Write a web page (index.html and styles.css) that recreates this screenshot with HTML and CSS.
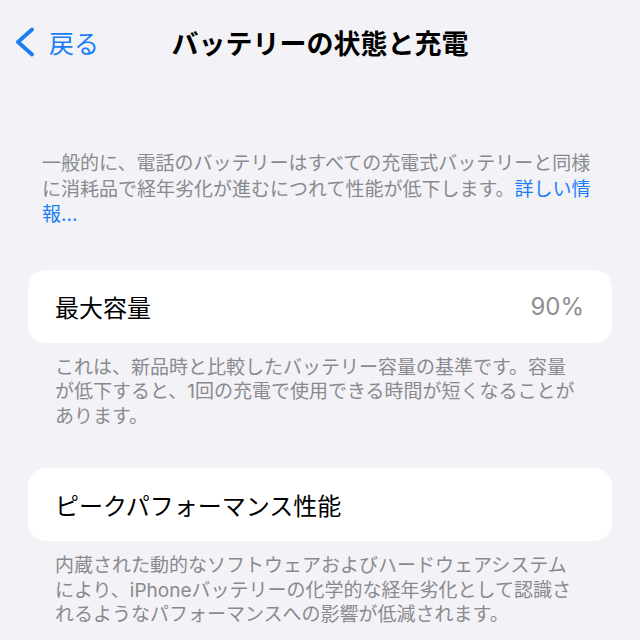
FILE: index.html
```html
<!DOCTYPE html>
<html lang="ja">
<head>
    <meta charset="UTF-8">
    <meta name="viewport" content="width=device-width, initial-scale=1.0">
    <title>バッテリーの状態と充電</title>
    <link rel="stylesheet" href="styles.css">
</head>
<body>
    <header class="nav">
        <a class="voltar" href="#">
            <svg class="chevron" width="22" height="30" viewBox="0 0 22 30">
                <path d="M18 2.5 L4 15 L18 27.5" fill="none" stroke="currentColor" stroke-width="3.8" stroke-linecap="round" stroke-linejoin="round"/>
            </svg>
            <span>戻る</span>
        </a>
        <h1 class="titulo">バッテリーの状態と充電</h1>
        <div></div>
    </header>

    <main class="conteudo">
        <p class="intro">一般的に、電話のバッテリーはすべての充電式バッテリーと同様<br>に消耗品で経年劣化が進むにつれて性能が低下します。<a href="#">詳しい情<br>報...</a></p>

        <section class="grupo">
            <div class="celula">
                <span>最大容量</span>
                <span class="valor">90%</span>
            </div>
            <p class="rodape">これは、新品時と比較したバッテリー容量の基準です。容量<br>が低下すると、1回の充電で使用できる時間が短くなることが<br>あります。</p>
        </section>

        <section class="grupo">
            <div class="celula">
                <span>ピークパフォーマンス性能</span>
            </div>
            <p class="rodape">内蔵された動的なソフトウェアおよびハードウェアシステム<br>により、iPhoneバッテリーの化学的な経年劣化として認識さ<br>れるようなパフォーマンスへの影響が低減されます。</p>
        </section>
    </main>
</body>
</html>
```

FILE: styles.css
```css
body {
    font-family: Inter, "Noto Sans CJK JP", sans-serif;
    background: #f2f2f7;
    color: #000;
    margin: 0;
    padding: 0;
}

.nav {
    height: 84px;
    display: grid;
    grid-template-columns: 1fr auto 1fr;
    align-items: center;
    padding: 0 14px;
}

.voltar {
    display: flex;
    align-items: center;
    gap: 13px;
    color: #1a7ef5;
    text-decoration: none;
    font-size: 25px;
}

.chevron {
    display: block;
}

.titulo {
    margin: 0;
    font-size: 27px;
    font-weight: 700;
    white-space: nowrap;
}

.conteudo {
    padding: 0 28px;
}

.intro {
    margin: 67px 0 0;
    padding: 0 14px;
    font-size: 19px;
    line-height: 25.5px;
    color: #8a8a8e;
    white-space: nowrap;
}

.intro a {
    color: #1a7ef5;
    text-decoration: none;
}

.grupo {
    margin-top: 42px;
}

.grupo + .grupo {
    margin-top: 39px;
}

.celula {
    background: white;
    border-radius: 18px;
    height: 73px;
    padding: 0 28px 0 27px;
    display: flex;
    align-items: center;
    justify-content: space-between;
    font-size: 24px;
}

.valor {
    color: #8e8e93;
}

.rodape {
    margin: 13px 0 0;
    padding: 0 27px;
    font-size: 19px;
    line-height: 24.5px;
    color: #8a8a8e;
    white-space: nowrap;
}
```
